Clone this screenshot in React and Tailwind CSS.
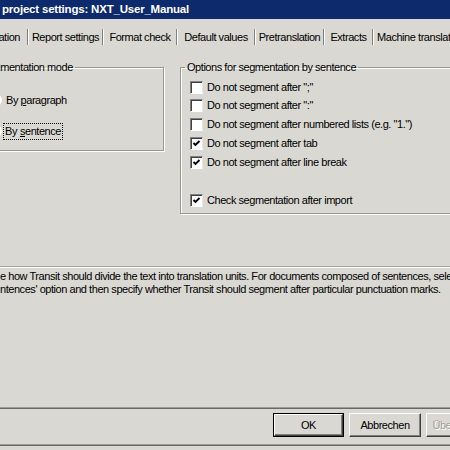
import React from 'react';

const tabs = [
  { label: 'Report settings', w: 'w-[73px]' },
  { label: 'Format check', w: 'w-[72px]' },
  { label: 'Default values', w: 'w-[76px]' },
  { label: 'Pretranslation', w: 'w-[67px]' },
  { label: 'Extracts', w: 'w-[47px]' },
];

const options = [
  { label: 'Do not segment after ";"', checked: false, h: 'h-[17px]' },
  { label: 'Do not segment after ":"', checked: false, h: 'h-[19px]' },
  { label: 'Do not segment after numbered lists (e.g. "1.")', checked: false, h: 'h-[19px]' },
  { label: 'Do not segment after tab', checked: true, h: 'h-[19px]' },
  { label: 'Do not segment after line break', checked: true, h: 'h-[19px]' },
];

const Separator = () => (
  <div className="flex h-[16px] shrink-0">
    <div className="w-px bg-[#808080]" />
    <div className="w-px bg-white" />
  </div>
);

const Checkbox = ({ checked }) => (
  <div className="w-[13px] h-[13px] shrink-0 bg-white border border-t-[#808080] border-l-[#808080] border-b-white border-r-[#e8e6e2] shadow-[inset_1px_1px_0_#404040] flex items-center justify-center">
    {checked && (
      <svg width="9" height="9" viewBox="0 0 9 9">
        <path d="M1.5 4 L3.5 6 L7.5 2" fill="none" stroke="#000" strokeWidth="1.9" />
      </svg>
    )}
  </div>
);

const Radio = ({ checked }) => (
  <div className="w-[12px] h-[12px] shrink-0 rounded-full bg-white border border-t-[#808080] border-l-[#808080] border-b-white border-r-white shadow-[inset_1px_1px_0_#404040] flex items-center justify-center">
    {checked && <div className="w-[4px] h-[4px] rounded-full bg-black" />}
  </div>
);

const Button = ({ children, isDefault, disabled }) => (
  <div className={`h-[24px] shrink-0 flex ${isDefault ? 'w-[71px] border border-black' : 'w-[72px]'}`}>
    <div className="flex-1 flex items-center justify-center border border-t-white border-l-white border-b-[#404040] border-r-[#404040] shadow-[inset_-1px_-1px_0_#808080]">
      <span className={disabled ? 'text-[#a09e99] [text-shadow:1px_1px_0_#fff]' : 'text-black'}>{children}</span>
    </div>
  </div>
);

const App = () => {
  return (
    <div className="w-[450px] h-[450px] overflow-hidden bg-[#dad8d3] flex flex-col font-['Liberation_Sans',Arial,sans-serif] text-[11px] tracking-[-0.45px] text-black leading-[13px]">
      {/* title bar */}
      <div className="h-[19px] shrink-0 bg-[#0c2a6c] flex items-center pl-[2px]">
        <span className="text-white font-bold text-[11.5px] tracking-[-0.2px] whitespace-nowrap">project settings: NXT_User_Manual</span>
      </div>

      {/* tab strip */}
      <div className="h-[20px] mt-[8px] shrink-0 flex items-center whitespace-nowrap">
        <div className="w-[27px] h-full shrink-0 flex items-center justify-end pr-[7px] overflow-hidden">
          <span className="shrink-0">Segmentation</span>
        </div>
        {tabs.map((t) => (
          <React.Fragment key={t.label}>
            <Separator />
            <div className={`${t.w} h-full shrink-0 flex items-center justify-center`}>{t.label}</div>
          </React.Fragment>
        ))}
        <Separator />
        <div className="pl-[3px] shrink-0">Machine translation</div>
      </div>

      {/* group boxes */}
      <div className="flex items-start mt-[14px] shrink-0">
        <fieldset className="-ml-[27px] w-[191px] h-[90px] shrink-0 border border-[#9a9893] shadow-[inset_1px_1px_0_#fff,1px_1px_0_#fff]">
          <legend className="ml-[6px] px-[2px] whitespace-nowrap">Segmentation mode</legend>
          <div className="pl-[16px] pt-[16px] flex flex-col">
            <div className="h-[20px] flex items-center gap-[4px]">
              <Radio />
              <span>By <u>p</u>aragraph</span>
            </div>
            <div className="h-[18px] mt-[12px] flex items-center gap-[1px]">
              <Radio checked />
              <span className="border border-dotted border-black px-[1px] h-[17px] flex items-center">By <u className="ml-[3px]">s</u>entence</span>
            </div>
          </div>
        </fieldset>

        <fieldset className="ml-[16px] w-[300px] h-[153px] shrink-0 border border-[#9a9893] shadow-[inset_1px_1px_0_#fff,1px_1px_0_#fff]">
          <legend className="ml-[4px] px-[2px] whitespace-nowrap">Options for segmentation by sentence</legend>
          <div className="pl-[9px] pt-[5px] flex flex-col whitespace-nowrap">
            {options.map((o) => (
              <div key={o.label} className={`${o.h} flex items-center gap-[4px]`}>
                <Checkbox checked={o.checked} />
                <span>{o.label}</span>
              </div>
            ))}
            <div className="h-[19px] mt-[19px] flex items-center gap-[4px]">
              <Checkbox checked />
              <span>Check segmentation after import</span>
            </div>
          </div>
        </fieldset>
      </div>

      {/* description */}
      <div className="mt-[52px] shrink-0">
        <div className="h-px bg-[#a3a19c]" />
        <div className="h-px bg-white" />
      </div>
      <div className="mt-[2px] shrink-0 whitespace-nowrap overflow-hidden">
        <div>e how Transit should divide the text into translation units. For documents composed of sentences, sele</div>
        <div>ntences' option and then specify whether Transit should segment after particular punctuation marks.</div>
      </div>

      <div className="flex-1" />

      {/* buttons */}
      <div className="shrink-0">
        <div className="h-px bg-[#9c9a95]" />
        <div className="h-px bg-[#6a6864]" />
      </div>
      <div className="mt-[4px] shrink-0 flex gap-[5px] pl-[273px]">
        <Button isDefault>OK</Button>
        <Button>Abbrechen</Button>
        <Button disabled>Übernehmen</Button>
      </div>
      <div className="mt-[7px] mb-[4px] shrink-0">
        <div className="h-px bg-[#9c9a95]" />
        <div className="h-px bg-[#6a6864]" />
      </div>
    </div>
  );
};

export default App;
